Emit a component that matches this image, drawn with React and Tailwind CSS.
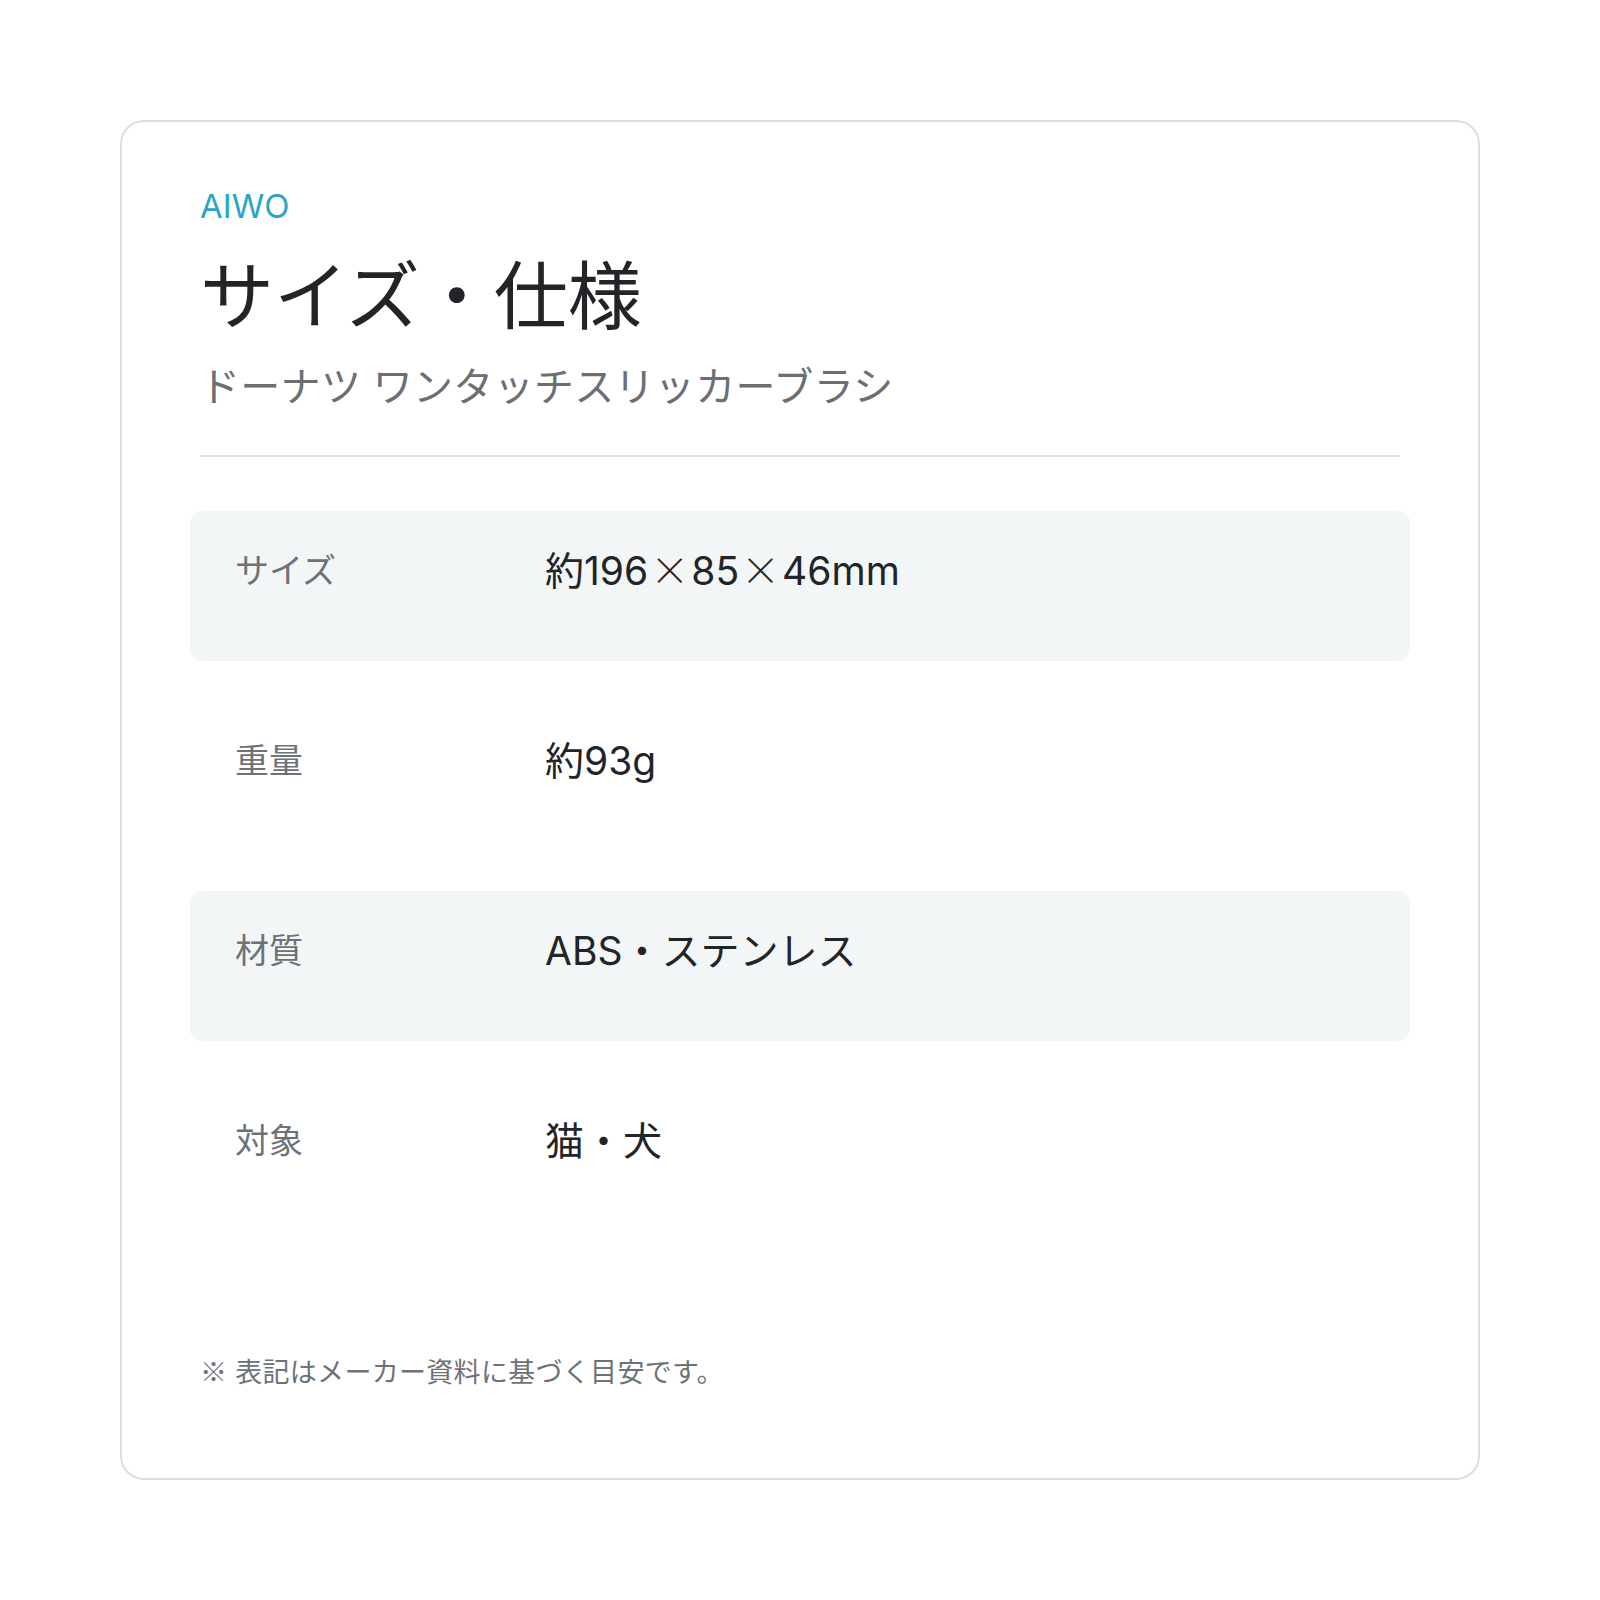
import React from "react";

const FONT = { fontFamily: 'Inter, "Noto Sans CJK JP", "Noto Sans", sans-serif' };

const rows = [
  { label: "サイズ", value: "約196×85×46mm", shaded: true },
  { label: "重量", value: "約93g", shaded: false },
  { label: "材質", value: "ABS・ステンレス", shaded: true },
  { label: "対象", value: "猫・犬", shaded: false },
];

function Value({ text }) {
  const parts = text.split("×");
  return (
    <>
      {parts.map((p, i) => (
        <React.Fragment key={i}>
          {i > 0 && (
            <span className="font-['Noto_Sans_CJK_JP',sans-serif] leading-[0px] px-[2px] font-light">×</span>
          )}
          {p}
        </React.Fragment>
      ))}
    </>
  );
}

export default function App() {
  return (
    <div className="w-[1600px] h-[1600px] bg-white pt-[120px] pl-[120px]" style={FONT}>
      <div className="w-[1360px] h-[1360px] border-2 border-[#d9e0e3] rounded-[24px] bg-white px-[78px] pt-[68px] flex flex-col">
        <div className="text-[33px] leading-[33px] text-[#2ba5c5]">AIWO</div>
        <h1 className="mt-[36px] text-[74px] leading-[74px] text-[#222427] font-normal">サイズ・仕様</h1>
        <div className="mt-[34px] text-[40px] leading-[40px] tracking-[0.3px] text-[#6b6f74]">ドーナツ ワンタッチスリッカーブラシ</div>
        <div className="mt-[48px] h-[2px] bg-[#dde0e2]" />
        <div className="mt-[54px] -mx-[10px] flex flex-col gap-[40px]">
          {rows.map((r) => (
            <div
              key={r.label}
              className={`h-[150px] rounded-[12px] pl-[45px] pt-[40px] grid grid-cols-[310px_1fr] items-center content-start ${r.shaded ? "bg-[#f2f6f7]" : ""}`}
            >
              <div className="h-[40px] text-[34px] leading-[40px] text-[#6d7278]">{r.label}</div>
              <div className="h-[40px] text-[39px] leading-[40px] text-[#222427]">
                <Value text={r.value} />
              </div>
            </div>
          ))}
        </div>
        <div className="mt-[128px] text-[27px] leading-[27px] tracking-[0.3px] text-[#6d7278]">
          <span className="font-['Noto_Sans_CJK_JP',sans-serif] leading-[0px]">※</span> 表記はメーカー資料に基づく目安です。
        </div>
      </div>
    </div>
  );
}
